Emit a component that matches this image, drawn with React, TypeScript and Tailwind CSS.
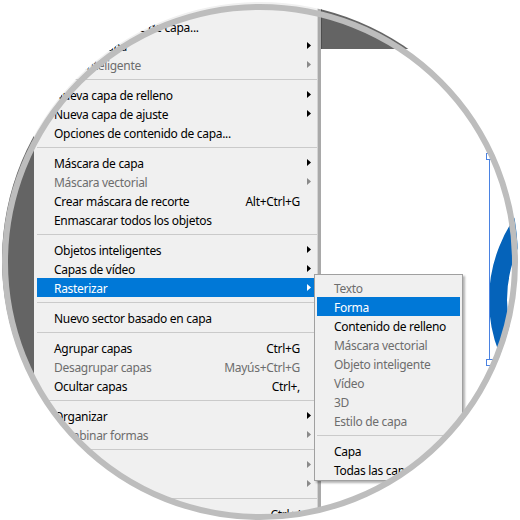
import React from 'react';

type Item =
  | { label: string; shortcut?: string; arrow?: boolean; disabled?: boolean; active?: boolean }
  | 'sep';

const mainItems: Item[] = [
  { label: 'Cambiar nombre de capa...' },
  { label: 'Estilo de capa', arrow: true },
  { label: 'Filtro inteligente', arrow: true, disabled: true },
  'sep',
  { label: 'Nueva capa de relleno', arrow: true },
  { label: 'Nueva capa de ajuste', arrow: true },
  { label: 'Opciones de contenido de capa...' },
  'sep',
  { label: 'Máscara de capa', arrow: true },
  { label: 'Máscara vectorial', arrow: true, disabled: true },
  { label: 'Crear máscara de recorte', shortcut: 'Alt+Ctrl+G' },
  { label: 'Enmascarar todos los objetos' },
  'sep',
  { label: 'Objetos inteligentes', arrow: true },
  { label: 'Capas de vídeo', arrow: true },
  { label: 'Rasterizar', arrow: true, active: true },
  'sep',
  { label: 'Nuevo sector basado en capa' },
  'sep',
  { label: 'Agrupar capas', shortcut: 'Ctrl+G' },
  { label: 'Desagrupar capas', shortcut: 'Mayús+Ctrl+G', disabled: true },
  { label: 'Ocultar capas', shortcut: 'Ctrl+,' },
  'sep',
  { label: 'Organizar', arrow: true },
  { label: 'Combinar formas', arrow: true, disabled: true },
  'sep',
  { label: 'Alinear', arrow: true, disabled: true },
  { label: 'Distribuir', arrow: true, disabled: true },
  'sep',
  { label: 'Bloquear capas...', shortcut: 'Ctrl+/' },
];

const subItems: Item[] = [
  { label: 'Texto', disabled: true },
  { label: 'Forma', active: true },
  { label: 'Contenido de relleno' },
  { label: 'Máscara vectorial', disabled: true },
  { label: 'Objeto inteligente', disabled: true },
  { label: 'Vídeo', disabled: true },
  { label: '3D', disabled: true },
  { label: 'Estilo de capa', disabled: true },
  'sep',
  { label: 'Capa' },
  { label: 'Todas las capas' },
];

const Arrow = ({ color }: { color: string }) => (
  <svg width="4" height="7" viewBox="0 0 4 7">
    <polygon points="0,0 4,3.5 0,7" fill={color} />
  </svg>
);

const MenuList = ({ items, withArrowCol }: { items: Item[]; withArrowCol: boolean }) => (
  <>
    {items.map((it, i) => {
      if (it === 'sep') {
        return (
          <div key={i} className="py-[5px]">
            <div className="h-px bg-[#cacaca]" />
          </div>
        );
      }
      const color = it.active ? 'text-white' : it.disabled ? 'text-[#6d6d6d]' : 'text-black';
      return (
        <div
          key={i}
          className={`flex items-center h-[19px] pl-[17px] ${it.active ? 'bg-[#0078d7]' : ''} ${color} ${withArrowCol ? '' : 'pr-[17px]'}`}
        >
          <span className="flex-1 whitespace-nowrap pt-[2px]">{it.label}</span>
          {it.shortcut && <span className="whitespace-nowrap pt-[2px]">{it.shortcut}</span>}
          {withArrowCol && (
            <div className="w-[17px] flex justify-end pr-[6px]">
              {it.arrow && <Arrow color={it.active ? '#ffffff' : it.disabled ? '#8a8a8a' : '#000000'} />}
            </div>
          )}
        </div>
      );
    })}
  </>
);

export default function App() {
  return (
    <div className="relative w-[520px] h-[520px] bg-white font-['Noto_Sans',sans-serif] text-[12px] tracking-[-0.3px] leading-none">
      <div className="m-[2px] w-[516px] h-[516px] rounded-full overflow-hidden">
        <div className="relative -m-[2px] w-[520px] h-[520px] flex">
          {/* panel strip */}
          <div className="w-[34px] bg-[#646464]" />

          {/* main menu */}
          <div className="w-[283px] bg-[#f0f0f0] pl-[3px] pt-[17px]">
            <MenuList items={mainItems} withArrowCol />
          </div>
          <div className="w-px bg-[#d4d4d4]" />
          <div className="w-[3px] bg-[#a9a9a9]" />

          {/* document canvas */}
          <div className="relative flex-1 bg-white">
            <div className="h-[49px] bg-[#646464] border-l border-[#4e4e4e]" />

            {/* selection box + shape */}
            <svg className="absolute left-[159px] top-[140px]" width="60" height="240" viewBox="0 0 60 240">
              <circle cx="154" cy="160" r="136" fill="none" stroke="#0563ba" strokeWidth="18" />
              <line x1="9.5" y1="13" x2="9.5" y2="224" stroke="#4a82e2" strokeWidth="1" />
              <rect x="6.5" y="13.5" width="6" height="6" fill="#ffffff" stroke="#4a82e2" strokeWidth="1" />
              <rect x="6.5" y="219.5" width="6" height="6" fill="#ffffff" stroke="#4a82e2" strokeWidth="1" />
            </svg>
          </div>

          {/* Rasterizar submenu */}
          <div className="absolute left-[314px] top-[274px] w-[149px] bg-[#f0f0f0] border border-[#a0a0a0] pt-[3px] pb-[1px] px-[2px] shadow-[2px_2px_2px_rgba(0,0,0,0.3)]">
            <MenuList items={subItems} withArrowCol={false} />
          </div>
        </div>
      </div>
      {/* lens ring */}
      <div className="absolute left-[2px] top-[2px] w-[516px] h-[516px] rounded-full border-[6px] border-[#bdbdbd] pointer-events-none" />
    </div>
  );
}
